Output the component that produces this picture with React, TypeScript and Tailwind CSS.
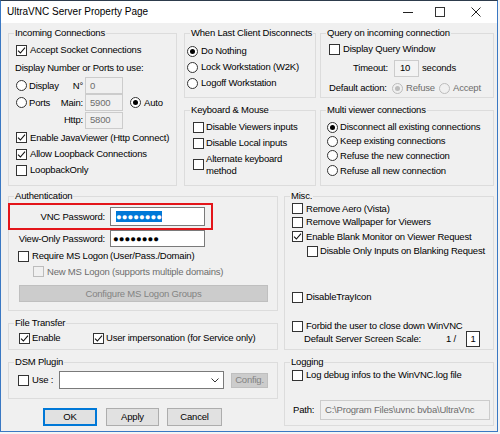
import clsx from 'clsx'
import type { ReactNode } from 'react'

interface BoxProps {
  checked?: boolean
  disabled?: boolean
}

const CheckBox = ({ checked, disabled }: BoxProps) => (
  <span
    className={clsx(
      'flex h-[11px] w-[11px] shrink-0 items-center justify-center border',
      disabled ? 'border-[#bcbcbc] bg-[#f0f0f0]' : 'border-[#333333] bg-white'
    )}
  >
    {checked && (
      <svg width="9" height="9" viewBox="0 0 9 9">
        <path d="M1 4.6 L3.4 7 L8 1.6" fill="none" stroke="#111" strokeWidth="1.1" />
      </svg>
    )}
  </span>
)

const Radio = ({ checked, disabled }: BoxProps) => (
  <span
    className={clsx(
      'flex h-[11px] w-[11px] shrink-0 items-center justify-center rounded-full border',
      disabled ? 'border-[#bcbcbc] bg-[#f0f0f0]' : 'border-[#333333] bg-white'
    )}
  >
    {checked && (
      <span
        className={clsx('h-[5px] w-[5px] rounded-full', disabled ? 'bg-[#bcbcbc]' : 'bg-black')}
      />
    )}
  </span>
)

interface GroupProps {
  title: string
  className: string
  children: ReactNode
}

const Group = ({ title, className, children }: GroupProps) => (
  <fieldset className={clsx('m-0 min-w-0 border border-[#dcdcdc] p-0', className)}>
    <legend className="ml-[5px] whitespace-nowrap px-[1px] leading-[12px]">{title}</legend>
    {children}
  </fieldset>
)

const Field = ({ value, className }: { value: string; className: string }) => (
  <div
    className={clsx(
      'flex items-center overflow-hidden border border-[#cccccc] bg-[#f0f0f0] text-[#6d6d6d]',
      className
    )}
  >
    {value}
  </div>
)

export default function App() {
  return (
    <div className="h-[434px] w-[500px] whitespace-nowrap bg-[#f4f4f4] font-['Liberation_Sans',Arial,sans-serif] text-[9.5px] leading-[12px] tracking-[-0.2px] text-black">
      <div className="flex h-[432px] w-[498px] flex-col border border-[#3a78c3] border-t-[#2d3b4c]">
        {/* title bar */}
        <div className="flex h-[22px] shrink-0 items-center bg-white">
          <span className="pl-[6px] text-[10px] tracking-normal">UltraVNC Server Property Page</span>
          <div className="ml-auto flex h-full">
            <div className="flex w-[32px] items-center justify-center">
              <span className="h-px w-[10px] bg-[#222]" />
            </div>
            <div className="flex w-[31px] items-center justify-center">
              <span className="h-[10px] w-[10px] border border-[#333]" />
            </div>
            <div className="flex w-[42px] items-center justify-center">
              <svg width="10" height="10" viewBox="0 0 10 10">
                <path d="M0.5 0.5 L9.5 9.5 M9.5 0.5 L0.5 9.5" stroke="#222" strokeWidth="1" />
              </svg>
            </div>
          </div>
        </div>

        {/* dialog body */}
        <div className="flex-1 bg-[#f0f0f0] pl-[7px] pt-[4px]">
          <div className="flex h-[159px]">
            <Group title="Incoming Connections" className="h-[159px] w-[169px]">
              <div className="flex flex-col pl-[7px] pt-[2px]">
                <div className="flex h-[18px] items-center">
                  <CheckBox checked />
                  <span className="ml-[3px]">Accept Socket Connections</span>
                </div>
                <div className="flex h-[18px] items-center -ml-px">Display Number or Ports to use:</div>
                <div className="flex h-[17px] items-center">
                  <span className="flex w-[43px] items-center">
                    <Radio />
                    <span className="ml-[2px]">Display</span>
                  </span>
                  <span className="w-[24px] text-right">N°</span>
                  <Field value="0" className="ml-[2px] h-[17px] w-[38px] pl-[4px]" />
                </div>
                <div className="flex h-[17px] items-center">
                  <span className="flex w-[43px] items-center">
                    <Radio />
                    <span className="ml-[2px]">Ports</span>
                  </span>
                  <span className="w-[24px] text-right">Main:</span>
                  <Field value="5900" className="ml-[2px] h-[17px] w-[38px] pl-[4px]" />
                  <span className="ml-[7px] flex items-center">
                    <Radio checked />
                    <span className="ml-[3px]">Auto</span>
                  </span>
                </div>
                <div className="flex h-[18px] items-center">
                  <span className="w-[43px]" />
                  <span className="w-[24px] text-right">Http:</span>
                  <Field value="5800" className="ml-[2px] h-[17px] w-[38px] pl-[4px]" />
                </div>
                <div className="flex h-[17px] items-center">
                  <CheckBox checked />
                  <span className="ml-[3px]">Enable JavaViewer (Http Connect)</span>
                </div>
                <div className="flex h-[16px] items-center">
                  <CheckBox checked />
                  <span className="ml-[3px]">Allow Loopback Connections</span>
                </div>
                <div className="flex h-[16px] items-center">
                  <CheckBox />
                  <span className="ml-[3px]">LoopbackOnly</span>
                </div>
              </div>
            </Group>

            <div className="ml-[7px] flex w-[132px] flex-col">
              <Group title="When Last Client Disconnects" className="h-[71px]">
                <div className="flex flex-col pl-[2px] pt-[4px]">
                  <div className="flex h-[16px] items-center">
                    <Radio checked />
                    <span className="ml-[3px]">Do Nothing</span>
                  </div>
                  <div className="flex h-[16px] items-center">
                    <Radio />
                    <span className="ml-[3px]">Lock Workstation (W2K)</span>
                  </div>
                  <div className="flex h-[16px] items-center">
                    <Radio />
                    <span className="ml-[3px]">Logoff Workstation</span>
                  </div>
                </div>
              </Group>
              <Group title="Keyboard & Mouse" className="mt-[6px] h-[82px]">
                <div className="flex flex-col pl-[8px] pt-[3px]">
                  <div className="flex h-[16px] items-center">
                    <CheckBox />
                    <span className="ml-[2px]">Disable Viewers inputs</span>
                  </div>
                  <div className="flex h-[16px] items-center">
                    <CheckBox />
                    <span className="ml-[2px]">Disable Local inputs</span>
                  </div>
                  <div className="flex h-[27px] items-center">
                    <CheckBox />
                    <span className="ml-[2px]">
                      Alternate keyboard
                      <br />
                      method
                    </span>
                  </div>
                </div>
              </Group>
            </div>

            <div className="ml-[4px] flex w-[174px] flex-col">
              <Group title="Query on incoming connection" className="h-[71px]">
                <div className="flex flex-col pl-[8px] pt-[2px]">
                  <div className="flex h-[16px] items-center">
                    <CheckBox />
                    <span className="ml-[3px]">Display Query Window</span>
                  </div>
                  <div className="flex h-[22px] items-center pl-[24px]">
                    <span className="w-[41px]">Timeout:</span>
                    <div className="flex h-[17px] w-[25px] items-center border border-[#cccccc] bg-[#f3f3f3] pl-[5px]">
                      10
                    </div>
                    <span className="ml-[3px]">seconds</span>
                  </div>
                  <div className="flex h-[18px] items-center">
                    <span className="w-[63px]">Default action:</span>
                    <Radio checked disabled />
                    <span className="ml-[3px] w-[33px] text-[#6d6d6d]">Refuse</span>
                    <Radio disabled />
                    <span className="ml-[3px] text-[#6d6d6d]">Accept</span>
                  </div>
                </div>
              </Group>
              <Group title="Multi viewer connections" className="mt-[6px] h-[82px]">
                <div className="flex flex-col pl-[6px] pt-[4px]">
                  <div className="flex h-[14px] items-center">
                    <Radio checked />
                    <span className="ml-[2px]">Disconnect all existing connections</span>
                  </div>
                  <div className="flex h-[14px] items-center">
                    <Radio />
                    <span className="ml-[2px]">Keep existing connections</span>
                  </div>
                  <div className="flex h-[15px] items-center">
                    <Radio />
                    <span className="ml-[2px]">Refuse the new connection</span>
                  </div>
                  <div className="flex h-[15px] items-center">
                    <Radio />
                    <span className="ml-[2px]">Refuse all new connection</span>
                  </div>
                </div>
              </Group>
            </div>
          </div>

          <div className="mt-[4px] flex">
            <div className="flex w-[270px] flex-col">
              <Group title="Authentication" className="h-[121px]">
                <div className="flex flex-col">
                  <div className="-ml-px mt-[1px] flex h-[27px] w-[205px] items-center border-[2px] border-[#e3151a]">
                    <span className="w-[95px] text-right">VNC Password:</span>
                    <div className="ml-[5px] flex h-[19px] w-[95px] items-center border border-[#7a7a7a] bg-white pl-[5px]">
                      <span className="bg-[#0078d7] leading-[11px] tracking-normal text-white">●●●●●●●●</span>
                    </div>
                  </div>
                  <div className="flex h-[17px] items-center">
                    <span className="w-[96px] text-right">View-Only Password:</span>
                    <div className="ml-[5px] flex h-[17px] w-[95px] items-center border border-[#7a7a7a] bg-white pl-[2px] tracking-normal">
                      ●●●●●●●●
                    </div>
                  </div>
                  <div className="mt-[1px] flex h-[16px] items-center pl-[9px]">
                    <CheckBox />
                    <span className="ml-[3px] w-[78px]">Require MS Logon</span>
                    <span>(User/Pass./Domain)</span>
                  </div>
                  <div className="flex h-[15px] items-center pl-[24px]">
                    <CheckBox disabled />
                    <span className="ml-[3px] text-[#6d6d6d]">
                      New MS Logon (supports multiple domains)
                    </span>
                  </div>
                  <div className="ml-[10px] mt-[6px] flex h-[17px] w-[249px] items-center justify-center border border-[#bfbfbf] bg-[#cccccc] text-[#838383]">
                    Configure MS Logon Groups
                  </div>
                </div>
              </Group>

              <Group title="File Transfer" className="mt-[6px] h-[33px]">
                <div className="mt-[1px] flex h-[16px] items-center pl-[10px]">
                  <span className="flex w-[74px] items-center">
                    <CheckBox checked />
                    <span className="ml-[2px]">Enable</span>
                  </span>
                  <CheckBox checked />
                  <span className="ml-[2px]">User impersonation (for Service only)</span>
                </div>
              </Group>

              <Group title="DSM Plugin" className="mt-[6px] h-[43px]">
                <div className="mt-[3px] flex h-[18px] items-center pl-[9px]">
                  <span className="flex w-[41px] items-center">
                    <CheckBox />
                    <span className="ml-[3px]">Use :</span>
                  </span>
                  <div className="flex h-[18px] w-[165px] items-center justify-end border border-[#7a7a7a] bg-white pr-[4px]">
                    <svg width="8" height="5" viewBox="0 0 8 5">
                      <path d="M0.5 0.5 L4 4 L7.5 0.5" fill="none" stroke="#333" strokeWidth="1" />
                    </svg>
                  </div>
                  <div className="ml-[7px] flex h-[15px] w-[37px] items-center justify-center border border-[#bfbfbf] bg-[#cccccc] text-[#838383]">
                    Config.
                  </div>
                </div>
              </Group>

              <div className="mt-[9px] flex h-[18px]">
                <button className="ml-[35px] h-[18px] w-[54px] border-[2px] border-[#0078d7] bg-[#e1e1e1]">
                  OK
                </button>
                <button className="ml-[9px] h-[18px] w-[53px] border border-[#adadad] bg-[#e1e1e1]">
                  Apply
                </button>
                <button className="ml-[8px] h-[18px] w-[55px] border border-[#adadad] bg-[#e1e1e1]">
                  Cancel
                </button>
              </div>
            </div>

            <div className="ml-[6px] flex w-[210px] flex-col">
              <Group title="Misc." className="h-[160px]">
                <div className="flex flex-col pl-[7px]">
                  <div className="flex h-[13px] items-center">
                    <CheckBox />
                    <span className="ml-[3px]">Remove Aero (Vista)</span>
                  </div>
                  <div className="flex h-[14px] items-center">
                    <CheckBox />
                    <span className="ml-[3px]">Remove Wallpaper for Viewers</span>
                  </div>
                  <div className="flex h-[15px] items-center">
                    <CheckBox checked />
                    <span className="ml-[3px]">Enable Blank Monitor on Viewer Request</span>
                  </div>
                  <div className="flex h-[14px] items-center pl-[15px]">
                    <CheckBox />
                    <span className="ml-[2px]">Disable Only Inputs on Blanking Request</span>
                  </div>
                  <div className="mt-[32px] flex h-[14px] items-center">
                    <CheckBox />
                    <span className="ml-[3px]">DisableTrayIcon</span>
                  </div>
                  <div className="mt-[15px] flex h-[14px] items-center">
                    <CheckBox />
                    <span className="ml-[3px]">Forbid the user to close down WinVNC</span>
                  </div>
                  <div className="flex h-[12px] items-center pl-[12px]">
                    <span className="w-[142px]">Default Server Screen Scale:</span>
                    <span className="w-[20px]">1 /</span>
                    <div className="flex h-[16px] w-[14px] items-center justify-center border border-[#333] bg-white">
                      1
                    </div>
                  </div>
                </div>
              </Group>

              <Group title="Logging" className="mt-[6px] h-[70px]">
                <div className="flex flex-col pl-[7px]">
                  <div className="flex h-[14px] items-center">
                    <CheckBox />
                    <span className="ml-[3px]">Log debug infos to the WinVNC.log file</span>
                  </div>
                  <div className="mt-[18px] flex h-[20px] items-center pl-[1px]">
                    <span className="w-[27px]">Path:</span>
                    <Field
                      value="C:\Program Files\uvnc bvba\UltraVnc"
                      className="h-[20px] w-[170px] pl-[4px]"
                    />
                  </div>
                </div>
              </Group>
            </div>
          </div>
        </div>
      </div>
    </div>
  )
}
